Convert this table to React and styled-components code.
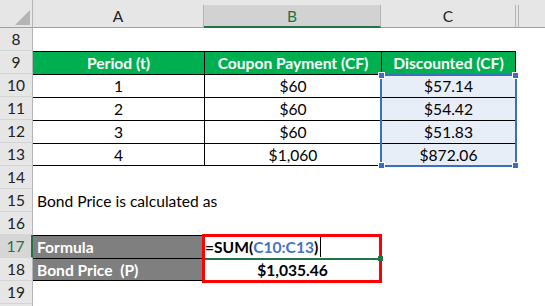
import React from "react";
import styled, { createGlobalStyle, css } from "styled-components";

const Global = createGlobalStyle`
  html, body { margin: 0; padding: 0; background: #ffffff; }
  body { font-family: Lato, "Liberation Sans", sans-serif; }
`;

const Sheet = styled.div`
  display: grid;
  grid-template-columns: 33px 171px 177px 135px 3px 1fr;
  grid-template-rows: 5px 23px;
  grid-auto-rows: 23px;
  width: 545px;
  height: 306px;
  overflow: hidden;
  font-family: Lato, "Liberation Sans", sans-serif;
  font-size: 15.6px;
  color: #000;
`;

const Corner = styled.div`
  grid-column: 1;
  grid-row: 1 / 3;
  background: #e6e6e6;
  border-right: 1px solid #b4b4b4;
  border-bottom: 1px solid #9e9e9e;
  position: relative;
  svg { position: absolute; left: 15px; top: 10px; }
`;

const TopStrip = styled.div`
  grid-column: 2 / -1;
  grid-row: 1;
  background: #e6e6e6;
`;

const ColHeader = styled.div`
  grid-row: 2;
  grid-column: ${(p) => p.$col};
  display: flex;
  align-items: center;
  justify-content: center;
  background: ${(p) => (p.$active ? "#d2d2d2" : "#e6e6e6")};
  color: ${(p) => (p.$active ? "#217346" : "#222")};
  border-right: ${(p) => (p.$plain ? "none" : "1px solid #b4b4b4")};
  border-bottom: ${(p) => (p.$active ? "2px solid #217346" : "1px solid #9e9e9e")};
  font-size: 15.5px;
`;

const RowHeader = styled.div`
  grid-column: 1;
  grid-row: ${(p) => p.$row};
  display: flex;
  align-items: center;
  justify-content: center;
  background: ${(p) => (p.$active ? "#d6d6d6" : "#e6e6e6")};
  color: ${(p) => (p.$active ? "#217346" : "#222")};
  border-bottom: 1px solid #d4d4d4;
  border-right: ${(p) => (p.$active ? "2px solid #217346" : "1px solid #b4b4b4")};
  box-sizing: border-box;
  font-size: 15.5px;
`;

const variants = {
  plain: css`background: #fff;`,
  head: css`
    background: #00b050;
    color: #fff;
    font-weight: 700;
    border-top: 1px solid #000;
  `,
  data: css`
    background: #fff;
    border-top: 1px solid #000;
  `,
  sel: css`
    background: #e8eef8;
    border-top: 1px solid #000;
  `,
  label: css`
    background: #7f7f7f;
    color: #fff;
    font-weight: 700;
    border-top: 1px solid #000;
  `,
  value: css`
    background: #fff;
    font-weight: 700;
  `,
};

const Cell = styled.div`
  grid-row: ${(p) => p.$row};
  grid-column: ${(p) => p.$col};
  display: flex;
  align-items: center;
  justify-content: ${(p) => (p.$align === "left" ? "flex-start" : "center")};
  padding: 0 ${(p) => (p.$align === "left" ? (p.$pad ?? 4) + "px" : "0")};
  box-sizing: border-box;
  white-space: nowrap;
  min-width: 0;
  ${(p) => variants[p.$v || "plain"]}
  ${(p) => p.$bl && css`border-left: 1px solid #000;`}
  ${(p) => p.$br && css`border-right: 1px solid #000;`}
  ${(p) => p.$bb && css`border-bottom: 1px solid #000;`}
`;

const FormulaText = styled.span`
  font-weight: 700;
  display: flex;
  align-items: center;
`;

const Ref = styled.span`
  color: #4472c4;
`;

const Caret = styled.span`
  display: inline-block;
  width: 1px;
  height: 20px;
  background: #000;
  margin-left: 2px;
`;

const Selection = styled.div`
  grid-column: 4;
  grid-row: 5 / 9;
  margin: 0 -1px -1px -1px;
  border: 2px solid #3a6ec4;
  position: relative;
  pointer-events: none;
`;

const Handle = styled.div`
  position: absolute;
  width: 5px;
  height: 5px;
  background: #3a6ec4;
  outline: 1px solid #fff;
  ${(p) => (p.$top ? "top: -3px;" : "bottom: -3px;")}
  ${(p) => (p.$left ? "left: -3px;" : "right: -3px;")}
`;

const RedBox = styled.div`
  grid-column: 3;
  grid-row: 12 / 14;
  margin: -1px -1px -2px -2px;
  border: 3px solid #ff0000;
  position: relative;
  pointer-events: none;
`;

const EditLine = styled.div`
  position: absolute;
  left: 0;
  right: 0;
  top: 21px;
  height: 2px;
  background: #217346;
`;

const EditHandle = styled.div`
  position: absolute;
  left: 173px;
  top: 19px;
  width: 5px;
  height: 5px;
  background: #217346;
`;

const rows = [8, 9, 10, 11, 12, 13, 14, 15, 16, 17, 18, 19, 20];

const table = {
  10: ["1", "$60", "$57.14"],
  11: ["2", "$60", "$54.42"],
  12: ["3", "$60", "$51.83"],
  13: ["4", "$1,060", "$872.06"],
};

function renderRow(r) {
  const g = r - 5;
  if (r === 9) {
    return (
      <React.Fragment key={r}>
        <Cell $row={g} $col={2} $v="head">Period (t)</Cell>
        <Cell $row={g} $col={3} $v="head" $bl>Coupon Payment (CF)</Cell>
        <Cell $row={g} $col={4} $v="head" $bl $br>Discounted (CF)</Cell>
      </React.Fragment>
    );
  }
  if (table[r]) {
    const [a, b, c] = table[r];
    const last = r === 13;
    return (
      <React.Fragment key={r}>
        <Cell $row={g} $col={2} $v="data" $bb={last}>{a}</Cell>
        <Cell $row={g} $col={3} $v="data" $bl $bb={last}>{b}</Cell>
        <Cell $row={g} $col={4} $v="sel" $bl $br $bb={last}>{c}</Cell>
      </React.Fragment>
    );
  }
  if (r === 15) {
    return (
      <Cell key={r} $row={g} $col="2 / -1" $align="left">
        Bond Price is calculated as
      </Cell>
    );
  }
  if (r === 17) {
    return (
      <React.Fragment key={r}>
        <Cell $row={g} $col={2} $v="label" $align="left">Formula</Cell>
        <Cell $row={g} $col={3} $align="left" $pad={1}>
          <FormulaText>
            =SUM(<Ref>C10:C13</Ref>)<Caret />
          </FormulaText>
        </Cell>
      </React.Fragment>
    );
  }
  if (r === 18) {
    return (
      <React.Fragment key={r}>
        <Cell $row={g} $col={2} $v="label" $align="left" $bb>Bond Price&nbsp;&nbsp;(P)</Cell>
        <Cell $row={g} $col={3} $v="value">$1,035.46</Cell>
      </React.Fragment>
    );
  }
  return null;
}

export default function App() {
  return (
    <>
      <Global />
      <Sheet>
        <Corner>
          <svg width="15" height="15" viewBox="0 0 15 15">
            <polygon points="15,0 15,15 0,15" fill="#b4b4b4" />
          </svg>
        </Corner>
        <TopStrip />
        <ColHeader $col={2}>A</ColHeader>
        <ColHeader $col={3} $active>B</ColHeader>
        <ColHeader $col={4}>C</ColHeader>
        <ColHeader $col={5} />
        <ColHeader $col={6} $plain />
        {rows.map((r) => (
          <React.Fragment key={"r" + r}>
            <RowHeader $row={r - 5} $active={r === 17}>{r < 20 ? r : null}</RowHeader>
            {renderRow(r)}
          </React.Fragment>
        ))}
        <Selection>
          <Handle $top $left />
          <Handle $top />
          <Handle $left />
          <Handle />
        </Selection>
        <RedBox>
          <EditLine />
          <EditHandle />
        </RedBox>
      </Sheet>
    </>
  );
}
